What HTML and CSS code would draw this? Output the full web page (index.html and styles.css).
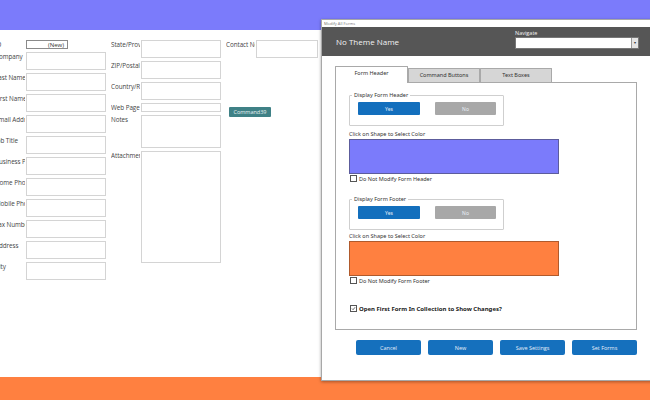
FILE: index.html
```html
<!DOCTYPE html>
<html lang="en">
<head>
  <meta charset="UTF-8" />
  <title>Contact Details - Modify All Forms</title>
  <link rel="stylesheet" href="styles.css">
</head>
<body>
  <div class="desktop">
    <!-- ===== form header band ===== -->
    <div class="band band-top"></div>

    <!-- ===== contact record ===== -->
    <main class="workspace">
      <div class="record-form">
        <div class="col col-main">
          <div class="field field-short"><span class="lbl">ID</span><span class="box box-id">(New)</span></div>
          <div class="field"><span class="lbl">Company</span><span class="box"></span></div>
          <div class="field"><span class="lbl">Last Name</span><span class="box"></span></div>
          <div class="field"><span class="lbl">First Name</span><span class="box"></span></div>
          <div class="field"><span class="lbl">Email Address</span><span class="box"></span></div>
          <div class="field"><span class="lbl">Job Title</span><span class="box"></span></div>
          <div class="field"><span class="lbl">Business Phone</span><span class="box"></span></div>
          <div class="field"><span class="lbl">Home Phone</span><span class="box"></span></div>
          <div class="field"><span class="lbl">Mobile Phone</span><span class="box"></span></div>
          <div class="field"><span class="lbl">Fax Number</span><span class="box"></span></div>
          <div class="field"><span class="lbl">Address</span><span class="box"></span></div>
          <div class="field"><span class="lbl">City</span><span class="box"></span></div>
        </div>

        <div class="col col-addr">
          <div class="field"><span class="lbl">State/Province</span><span class="box"></span></div>
          <div class="field"><span class="lbl">ZIP/Postal Code</span><span class="box"></span></div>
          <div class="field"><span class="lbl">Country/Region</span><span class="box"></span></div>
          <div class="field field-short"><span class="lbl">Web Page</span><span class="box"></span></div>
          <div class="field field-notes"><span class="lbl">Notes</span><span class="box"></span></div>
          <div class="field field-attach"><span class="lbl">Attachments</span><span class="box"></span></div>
        </div>

        <div class="col col-extra">
          <div class="field"><span class="lbl">Contact Notes</span><span class="box"></span></div>
          <button class="cmd-btn">Command39</button>
        </div>
      </div>
    </main>

    <!-- ===== form footer band ===== -->
    <div class="band band-bottom"></div>

    <!-- ===== Modify All Forms dialog ===== -->
    <div class="dialog">
      <div class="dialog-title">Modify All Forms</div>

      <div class="theme-bar">
        <span class="theme-name">No Theme Name</span>
        <div class="nav-pick">
          <span class="nav-label">Navigate</span>
          <div class="nav-select"><span class="nav-arrow">&#9662;</span></div>
        </div>
      </div>

      <div class="dialog-body">
        <div class="tabs">
          <div class="tab active">Form Header</div>
          <div class="tab">Command Buttons</div>
          <div class="tab">Text Boxes</div>
        </div>

        <div class="tab-panel">
          <fieldset class="group">
            <legend>Display Form Header</legend>
            <div class="toggle-row">
              <button class="btn-yes">Yes</button>
              <button class="btn-no">No</button>
            </div>
          </fieldset>
          <div class="swatch-label">Click on Shape to Select Color</div>
          <div class="swatch swatch-header"></div>
          <div class="check-line"><span class="check"></span>Do Not Modify Form Header</div>

          <fieldset class="group group-footer">
            <legend>Display Form Footer</legend>
            <div class="toggle-row">
              <button class="btn-yes">Yes</button>
              <button class="btn-no">No</button>
            </div>
          </fieldset>
          <div class="swatch-label swatch-label-tight">Click on Shape to Select Color</div>
          <div class="swatch swatch-footer"></div>
          <div class="check-line"><span class="check"></span>Do Not Modify Form Footer</div>

          <div class="check-line check-open">
            <span class="check checked">
              <svg viewBox="0 0 6 6" width="6" height="6"><path d="M1.2 3.1 L2.5 4.4 L4.9 1.5" fill="none" stroke="#333" stroke-width="0.9"/></svg>
            </span>Open First Form In Collection to Show Changes?
          </div>
        </div>

        <div class="actions">
          <button class="act-btn">Cancel</button>
          <button class="act-btn">New</button>
          <button class="act-btn">Save Settings</button>
          <button class="act-btn">Set Forms</button>
        </div>
      </div>
    </div>
  </div>
</body>
</html>
```

FILE: styles.css
```css
body {
  margin: 0;
  font-family: 'Open Sans', 'Liberation Sans', sans-serif;
  background-color: #fff;
}

.desktop {
  position: relative;
  width: 650px;
  height: 400px;
  overflow: hidden;
  display: flex;
  flex-direction: column;
}

.band-top {
  height: 30px;
  background-color: #7b7bfb;
}
.band-bottom {
  height: 23px;
  background-color: #ff8040;
}

.workspace {
  height: 347px;
  background: #fff;
  box-sizing: border-box;
  padding-top: 10px;
}

/* ===== record form ===== */
.record-form {
  display: flex;
  gap: 5px;
  margin-left: -5px;
}
.col {
  display: flex;
  flex-direction: column;
  gap: 3px;
}
.field {
  display: flex;
  height: 18px;
}
.field-short { height: 9px; }
.field-notes { height: 33px; }
.field-attach { height: 112px; }

.lbl {
  width: 30px;
  margin-right: 1px;
  overflow: hidden;
  white-space: nowrap;
  font-size: 6.3px;
  letter-spacing: -0.05px;
  line-height: 10px;
  color: #444;
}
.col-addr .lbl,
.col-extra .lbl {
  width: 29px;
}

.box {
  width: 80px;
  height: 100%;
  border: 1px solid #d4d4d4;
  box-sizing: border-box;
  background: #fff;
}
.col-extra .box {
  width: 62px;
}
.col-main .box-id {
  width: 42px;
  border-color: #8a8a8a;
  font-size: 6px;
  line-height: 8px;
  text-align: right;
  padding-right: 3px;
  color: #333;
}

.cmd-btn {
  margin: 46px 0 0 3px;
  width: 42px;
  height: 10px;
  padding: 0;
  border: none;
  border-radius: 1px;
  background: #3f8186;
  color: #e8f2f2;
  font-family: inherit;
  font-size: 5.5px;
}

/* ===== dialog ===== */
.dialog {
  position: absolute;
  left: 321px;
  top: 19px;
  width: 340px;
  height: 362px;
  box-sizing: border-box;
  background: #fff;
  border: 1px solid #a8a8a8;
  box-shadow: 0 1px 3px rgba(0, 0, 0, 0.35);
  display: flex;
  flex-direction: column;
}

.dialog-title {
  height: 7px;
  padding-left: 2px;
  font-size: 4px;
  line-height: 7px;
  color: #777;
}

.theme-bar {
  height: 29px;
  background: #565656;
  display: grid;
  grid-template-columns: 179px 124px;
  padding-left: 14px;
}
.theme-name {
  align-self: center;
  font-size: 8px;
  color: #f2f2f2;
}
.nav-pick {
  display: flex;
  flex-direction: column;
  padding-top: 2px;
}
.nav-label {
  height: 8px;
  font-size: 5.5px;
  line-height: 8px;
  color: #f4f4f4;
}
.nav-select {
  height: 12px;
  background: #fff;
  border: 1px solid #777;
  box-sizing: border-box;
  display: flex;
  justify-content: flex-end;
}
.nav-arrow {
  width: 6px;
  background: #e4e4e4;
  border-left: 1px solid #999;
  font-size: 4px;
  line-height: 10px;
  text-align: center;
  color: #333;
}

.dialog-body {
  padding: 10px 0 0 13px;
  font-family: 'Noto Sans', 'Open Sans', sans-serif;
}

.tabs {
  display: flex;
  align-items: flex-end;
  height: 16px;
}
.tab {
  width: 72px;
  height: 14px;
  box-sizing: border-box;
  background: #d6d6d6;
  border: 1px solid #a9a9a9;
  border-bottom: none;
  border-radius: 1px 1px 0 0;
  font-size: 5.5px;
  line-height: 13px;
  text-align: center;
  color: #333;
}
.tab.active {
  width: 73px;
  height: 17px;
  background: #fff;
  position: relative;
  z-index: 1;
  margin-bottom: -1px;
}

.tab-panel {
  width: 302px;
  height: 248px;
  box-sizing: border-box;
  border: 1px solid #a9a9a9;
  padding: 8px 0 0 13px;
  display: flex;
  flex-direction: column;
}

.group {
  width: 155px;
  height: 35px;
  box-sizing: border-box;
  margin: 0;
  padding: 0 0 0 8px;
  border: 1px solid #cfcfcf;
  border-radius: 1px;
}
.group legend {
  padding: 0 2px;
  margin-left: -6px;
  font-size: 5.5px;
  line-height: 8px;
  color: #333;
}
.group-footer {
  margin-top: 12px;
}
.toggle-row {
  display: flex;
  gap: 15px;
  margin-top: 3px;
}
.btn-yes,
.btn-no {
  width: 62px;
  height: 13px;
  padding: 0;
  border: none;
  border-radius: 1px;
  font-family: inherit;
  font-size: 5px;
  color: #e8f0f8;
}
.btn-yes { background: #136fbd; }
.btn-no { background: #a8a8a8; width: 61px; }

.swatch-label {
  margin-top: 4px;
  height: 9px;
  font-size: 5.5px;
  line-height: 9px;
  color: #333;
}
.swatch-label-tight {
  margin-top: 2px;
}
.swatch {
  width: 210px;
  height: 35px;
  box-sizing: border-box;
  border: 1px solid #5c5c9c;
}
.swatch-header { background: #7b7bfb; }
.swatch-footer { background: #ff8040; border-color: #b05a2c; }

.check-line {
  display: flex;
  align-items: center;
  gap: 2px;
  height: 9px;
  margin-left: 1px;
  font-size: 5.5px;
  color: #333;
}
.check {
  width: 5px;
  height: 5px;
  border: 1px solid #555;
  display: flex;
  align-items: center;
  justify-content: center;
}
.check svg {
  width: 5px;
  height: 5px;
}
.check-open {
  margin-top: 19px;
  font-size: 6px;
  font-weight: bold;
  color: #1a1a1a;
}

.actions {
  display: flex;
  gap: 7px;
  margin: 10px 0 0 21px;
}
.act-btn {
  width: 65px;
  height: 15px;
  padding: 0;
  border: none;
  border-radius: 2px;
  background: #1570bd;
  color: #e6eef8;
  font-family: 'Open Sans', sans-serif;
  font-size: 5.5px;
}
```
